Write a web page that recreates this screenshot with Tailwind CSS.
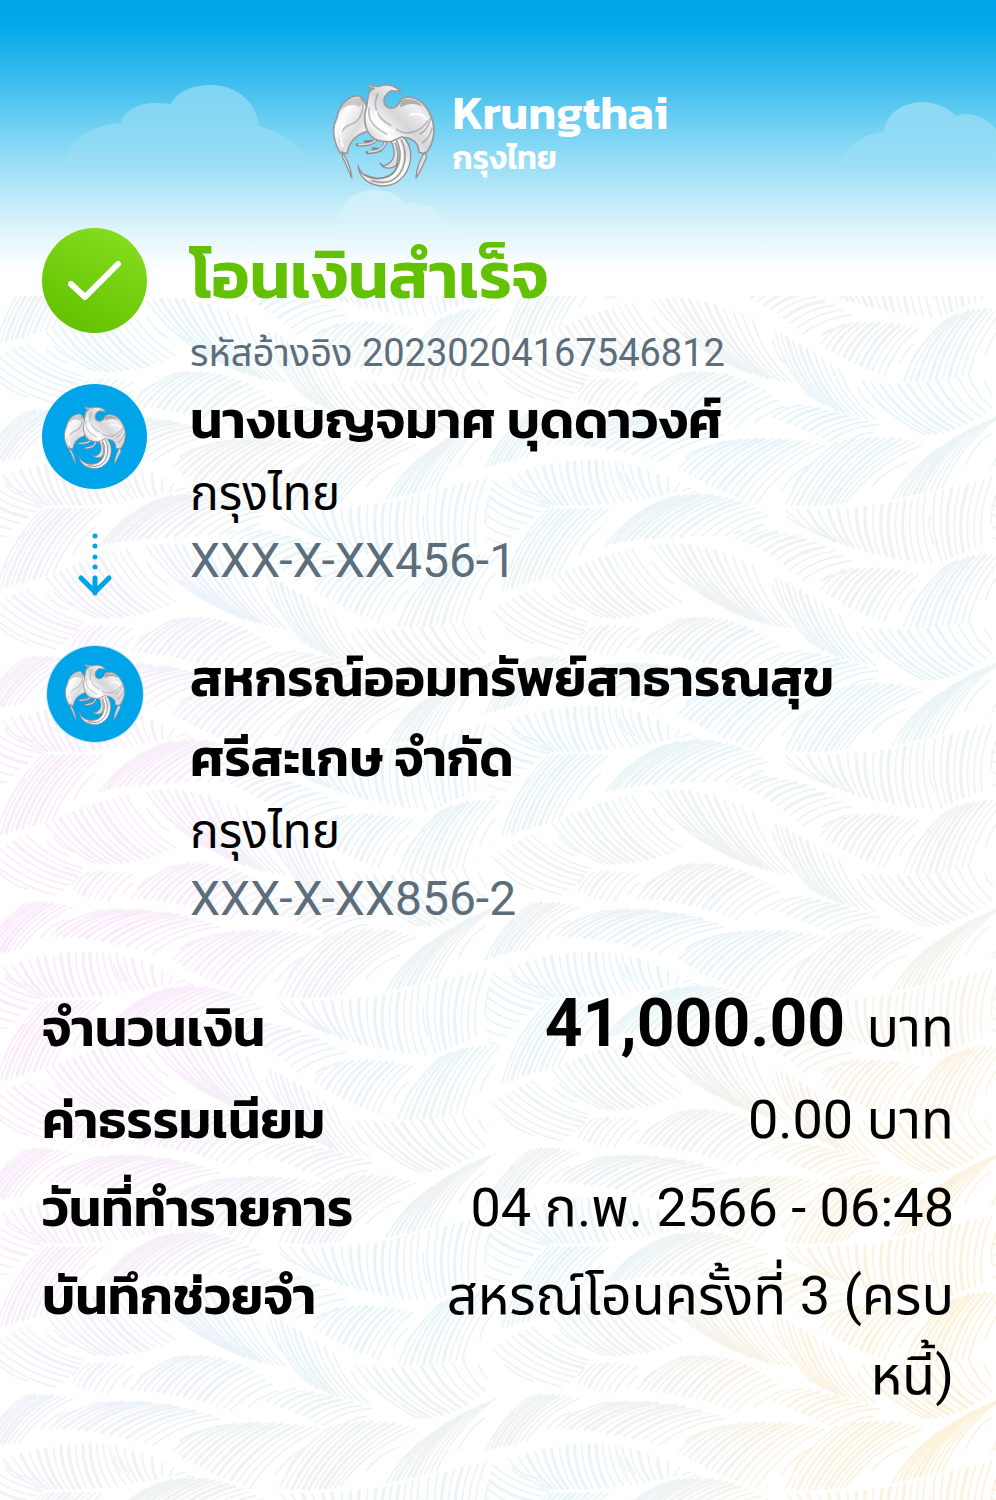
<!DOCTYPE html>
<html lang="th">
<head>
<meta charset="utf-8">
<meta name="viewport" content="width=device-width, initial-scale=1">
<title>Krungthai - โอนเงินสำเร็จ</title>
<script src="https://cdn.jsdelivr.net/npm/@tailwindcss/browser@4"></script>
</head>
<body class="bg-white text-black font-['Roboto','Noto_Sans_Thai','Noto_Sans',sans-serif]">
<div class="relative isolate min-h-screen overflow-hidden">

  <!-- Woven leaf texture -->
  <svg class="absolute inset-x-0 top-[296px] bottom-0 -z-20 h-full w-full" aria-hidden="true">
    <defs>
      <g id="leaves" fill="none" stroke="#fff"><path id="veinsThin" stroke-width="5"/><path id="veinsThick" stroke-width="9"/></g>
      <pattern id="weave" width="1518" height="738" patternUnits="userSpaceOnUse" patternTransform="translate(492 424) scale(.3333)">
        <use href="#leaves"/><use href="#leaves" x="-1518"/><use href="#leaves" x="1518"/>
        <use href="#leaves" y="-738"/><use href="#leaves" x="-1518" y="-738"/><use href="#leaves" x="1518" y="-738"/>
        <use href="#leaves" y="738"/>
      </pattern>
      <mask id="weaveMask" maskUnits="userSpaceOnUse" x="0" y="0" width="100%" height="100%"><rect width="100%" height="100%" fill="url(#weave)"/></mask>
      <linearGradient id="bands" gradientUnits="userSpaceOnUse" x1="0" y1="70" x2="60" y2="310" spreadMethod="repeat">
        <stop offset="0" stop-color="#e6f5fb"/><stop offset=".35" stop-color="#ecf4f4"/><stop offset=".65" stop-color="#eff2f2"/><stop offset="1" stop-color="#e6f5fb"/>
      </linearGradient>
      <radialGradient id="pink" cx="0" cy=".44" r=".4"><stop offset="0" stop-color="#fbe9fb"/><stop offset=".5" stop-color="#f9edfb"/><stop offset="1" stop-color="#f3effb" stop-opacity="0"/></radialGradient>
      <radialGradient id="gold" cx="1" cy=".72" r=".42"><stop offset="0" stop-color="#fdf0d4"/><stop offset=".5" stop-color="#fbf3e3"/><stop offset="1" stop-color="#f6f3ec" stop-opacity="0"/></radialGradient>
    </defs>
    <g mask="url(#weaveMask)">
      <rect width="100%" height="100%" fill="url(#bands)"/>
      <rect width="100%" height="100%" fill="url(#pink)"/>
      <rect width="100%" height="100%" fill="url(#gold)"/>
    </g>
  </svg>

  <!-- Sky -->
  <div class="absolute inset-x-0 top-0 -z-10 h-[296px] bg-[linear-gradient(180deg,#00a4e8_0px,#02a7e9_22px,#35bbed_75px,#7ad4f3_135px,#b5e7f8_190px,#e3f6fc_235px,#ffffff_270px)]">
    <svg class="absolute top-[80px] left-[66px] h-[90px] w-[240px]" viewBox="0 0 240 90" aria-hidden="true">
      <defs><linearGradient id="c1" x1="0" y1="0" x2="0" y2="1"><stop offset="0" stop-color="#fff" stop-opacity=".34"/><stop offset="1" stop-color="#fff" stop-opacity="0"/></linearGradient></defs>
      <path d="M0 76C8 56 32 44 55 43C60 27 76 20 105 24C112 10 128 5 146 5C174 6 191 25 193 46C215 52 232 64 240 78V90H0Z" fill="url(#c1)"/>
    </svg>
    <svg class="absolute top-[98px] right-0 h-[70px] w-[154px]" viewBox="0 0 154 70" aria-hidden="true">
      <path d="M0 60C8 44 25 35 42 34C44 14 62 4 82 4C97 5 109 12 114 18C130 13 146 20 154 32V70H0Z" fill="url(#c1)"/>
    </svg>
    <svg class="absolute top-[188px] left-[330px] h-[50px] w-[140px]" viewBox="0 0 140 50" aria-hidden="true">
      <path d="M8 50C2 22 20 2 45 2C60 2 70 8 76 16C96 12 112 22 120 38L140 50Z" fill="url(#c1)"/>
    </svg>
  </div>

  <svg class="absolute size-0" aria-hidden="true">
    <defs>
      <linearGradient id="silver" x1="0" y1="0" x2="1" y2="1"><stop offset="0" stop-color="#c2c2c5"/><stop offset=".3" stop-color="#fdfdfd"/><stop offset=".6" stop-color="#dcdcdf"/><stop offset=".8" stop-color="#fff"/><stop offset="1" stop-color="#aaa7a8"/></linearGradient>
      <linearGradient id="silver2" x1="1" y1="0" x2="0" y2="1"><stop offset="0" stop-color="#a8a6a8"/><stop offset=".3" stop-color="#f0f0f2"/><stop offset=".5" stop-color="#d6d6d9"/><stop offset=".7" stop-color="#fff"/><stop offset="1" stop-color="#a8a6a8"/></linearGradient>
      <symbol id="garuda" viewBox="0 0 336 336">
        <g stroke-linejoin="round" stroke-linecap="round">
          <path d="M94 54C66 52 34 78 27 118C12 148 14 186 36 224L58 226C60 200 80 170 118 160L128 120C120 94 112 66 94 54Z" fill="url(#silver)" stroke="#9c999b" stroke-width="5"/>
          <path d="M218 64C246 48 282 64 302 100C326 142 322 192 292 228L272 222C274 196 254 182 232 178C210 196 160 194 138 182C110 162 104 122 116 86C120 60 118 38 138 31C124 31 118 26 119 18C128 24 140 25 152 25C168 20 184 20 196 25C206 28 214 34 219 42C207 38 198 40 190 38C174 44 164 62 170 78C176 92 196 94 206 84C216 76 218 72 218 64Z" fill="url(#silver2)" stroke="#9c999b" stroke-width="5"/>
          <path d="M220 66C250 56 274 70 284 86C262 74 240 76 216 88Z" fill="#8e8c8e" opacity=".65"/>
          <path d="M90 58C70 58 46 78 38 96C56 80 78 76 96 88C104 74 102 62 90 58Z" fill="#9b999b" opacity=".5"/>
          <path d="M100 62C112 90 98 126 76 136C52 144 34 162 36 190M124 90C116 126 140 150 176 168M150 46C132 84 146 120 188 142M206 154C236 176 280 160 298 130M276 168C294 158 304 142 306 122M284 194C300 182 310 164 312 150" fill="none" stroke="#8d8a8c" stroke-width="5" opacity=".55"/>
          <path d="M144 100C146 130 170 150 196 160M50 130C38 150 32 176 44 204M248 110C268 104 286 110 294 122" fill="none" stroke="#fff" stroke-width="7" opacity=".9"/>
          <path d="M42 220C54 240 68 262 72 300C60 278 54 254 44 240ZM290 222C276 244 266 268 264 300C278 280 286 258 296 238Z" fill="#dedde0" stroke="#969395" stroke-width="4"/>
          <path d="M142 188C126 204 108 200 88 200M134 190L112 192M172 194C162 220 146 222 118 224M158 216L136 212" fill="none" stroke="#8c898b" stroke-width="10"/>
          <path d="M142 188C126 202 108 199 92 199M172 194C162 218 146 220 122 222" fill="none" stroke="#dddcdf" stroke-width="5"/>
          <path d="M190 190C204 222 202 250 172 262C166 264 158 260 156 254C164 274 192 276 208 258C206 288 174 308 134 300C108 294 92 280 90 262C92 300 126 324 168 324C216 322 250 280 248 226C246 204 238 188 224 176Z" fill="url(#silver)" stroke="#918e90" stroke-width="4"/>
          <path d="M206 188C222 222 220 268 186 292C162 306 132 302 110 290M220 186C240 226 234 286 190 308C170 316 150 314 132 308M202 196C212 220 212 240 206 258" fill="none" stroke="#8b888a" stroke-width="5" opacity=".8"/>
          <path d="M214 192C230 226 226 276 190 298" fill="none" stroke="#fff" stroke-width="5"/>
        </g>
      </symbol>
    </defs>
  </svg>

  <header class="flex items-center justify-center gap-[13px] pt-[78px] pb-0.5 text-white font-['Kanit','Noto_Sans_Thai',sans-serif] font-semibold">
    <svg class="size-[112px] shrink-0" role="img" aria-label="Krungthai"><use href="#garuda"/></svg>
    <div>
      <p class="text-[47px] leading-[48px]">Krungthai</p>
      <p class="text-[32px] leading-[42px]">กรุงไทย</p>
    </div>
  </header>

  <main class="px-[42px] pb-20">
    <section class="grid grid-cols-[105px_minmax(0,1fr)] gap-x-[43px] pt-9">
      <svg class="size-[105px]" viewBox="0 0 105 105" aria-hidden="true">
        <defs><linearGradient id="ok" x1=".8" y1="0" x2=".3" y2="1"><stop offset="0" stop-color="#86de20"/><stop offset="1" stop-color="#62c100"/></linearGradient></defs>
        <circle cx="52.500" cy="52.500" r="52.500" fill="url(#ok)"/>
        <path d="M29 56L43 69L76 36" fill="none" stroke="#fff" stroke-width="6" stroke-linecap="round" stroke-linejoin="round"/>
      </svg>
      <div>
        <h1 class="text-[65px] leading-[94px] font-semibold text-[#62c100] font-['Kanit','Noto_Sans_Thai',sans-serif]">โอนเงินสำเร็จ</h1>
        <p class="text-[38px] leading-[62px] text-[#5c6d7c]">รหัสอ้างอิง 20230204167546812</p>
      </div>
    </section>

    <section class="grid grid-cols-[105px_minmax(0,1fr)] gap-x-[43px] pb-11">
      <div class="flex flex-col items-center">
        <div class="grid size-[105px] place-items-center rounded-full bg-[#00a4e8]"><svg class="size-[68px]" role="img" aria-label="กรุงไทย"><use href="#garuda"/></svg></div>
        <svg class="mt-[43px] h-[66px] w-[36px]" viewBox="0 0 36 66" fill="none" stroke="#00a4e8" stroke-linecap="round" stroke-linejoin="round" aria-hidden="true">
          <path d="M18 4V4M18 14V14M18 25V25M18 35V35" stroke-width="5"/>
          <path d="M18 46V61M4 46L18 60L32 46" stroke-width="5"/>
        </svg>
      </div>
      <div class="-mt-1">
        <h2 class="text-[52px] leading-[80px] font-semibold font-['Kanit','Noto_Sans_Thai',sans-serif]">นางเบญจมาศ บุดดาวงศ์</h2>
        <p class="text-[48px] leading-[67px]">กรุงไทย</p>
        <p class="text-[48px] leading-[67px] text-[#5c6d7c]">XXX-X-XX456-1</p>
      </div>
    </section>

    <section class="grid grid-cols-[105px_minmax(0,1fr)] gap-x-[43px]">
      <div class="mx-auto mt-1 grid size-[96px] place-items-center rounded-full bg-[#00a4e8] ring-1 ring-[#cfe8f5]"><svg class="size-[66px]" role="img" aria-label="กรุงไทย"><use href="#garuda"/></svg></div>
      <div class="-mt-1">
        <h2 class="text-[52px] leading-[80px] font-semibold font-['Kanit','Noto_Sans_Thai',sans-serif]">สหกรณ์ออมทรัพย์สาธารณสุขศรีสะเกษ จำกัด</h2>
        <p class="text-[48px] leading-[67px]">กรุงไทย</p>
        <p class="text-[48px] leading-[67px] text-[#5c6d7c]">XXX-X-XX856-2</p>
      </div>
    </section>

    <dl class="mt-[52px] flex flex-col gap-2 text-[54px] leading-[80px]">
      <div class="flex items-baseline justify-between gap-6 pb-1">
        <dt class="shrink-0 text-[52px] font-semibold font-['Kanit','Noto_Sans_Thai',sans-serif]">จำนวนเงิน</dt>
        <dd class="text-right"><span class="mr-2 text-[66px] font-bold">41,000.00</span> บาท</dd>
      </div>
      <div class="flex items-baseline justify-between gap-6">
        <dt class="shrink-0 text-[52px] font-semibold font-['Kanit','Noto_Sans_Thai',sans-serif]">ค่าธรรมเนียม</dt>
        <dd class="text-right">0.00 บาท</dd>
      </div>
      <div class="flex items-baseline justify-between gap-6">
        <dt class="shrink-0 text-[52px] font-semibold font-['Kanit','Noto_Sans_Thai',sans-serif]">วันที่ทำรายการ</dt>
        <dd class="text-right">04 ก.พ. 2566 - 06:48</dd>
      </div>
      <div class="flex items-baseline justify-between gap-6">
        <dt class="shrink-0 text-[52px] font-semibold font-['Kanit','Noto_Sans_Thai',sans-serif]">บันทึกช่วยจำ</dt>
        <dd class="max-w-[560px] text-right">สหรณ์โอนครั้งที่ 3 (ครบหนี้)</dd>
      </div>
    </dl>
  </main>
</div>

<script>
  // Each leaf: start edge (3 points), end edge (3 points), number of veins.
  // Veins run from the start edge to the end edge and bow to the left.
  const leaves = [
    [30,350,100,330,200,300, 170,105,250,100,350,105, 10],
    [340,215,420,190,700,185, 520,75,680,30,830,125, 15],
    [730,195,840,230,930,320, 800,165,950,180,1080,260, 10],
    [985,350,1080,410,1175,445, 1060,285,1180,275,1280,300, 11],
    [1235,460,1330,465,1430,440, 1370,270,1440,235,1540,240, 10],
    [260,515,300,540,365,545, 310,455,370,450,440,462, 6],
    [435,535,580,540,730,600, 570,435,720,410,860,515, 15],
    [840,570,930,600,1010,640, 930,530,1040,550,1160,590, 8],
    [-20,720,30,700,100,690, 120,550,180,540,260,560, 8],
    [190,650,320,650,500,700, 350,570,560,560,700,620, 13],
    [560,720,660,780,790,830, 700,640,860,620,1000,650, 13],
    [880,830,980,840,1060,825, 1040,640,1180,610,1290,650, 11],
    [1200,815,1270,800,1350,780, 1360,650,1450,590,1530,560, 9],
    [50,740,240,680,370,700, 160,830,240,840,420,820, 14],
    [390,700,470,720,600,780, 440,815,500,805,570,790, 7],
    [880,105,1150,110,1300,60, 1000,190,1130,250,1320,270, 16],
    [1330,55,1420,30,1500,10, 1350,265,1400,240,1470,215, 7],
    [1518,20,1500,80,1500,190, 1690,100,1620,140,1560,210, 6],
    [180,310,300,250,420,225, 330,430,450,440,570,385, 12],
    [480,215,600,190,780,270, 700,400,790,450,900,465, 12],
    [850,310,920,340,1040,420, 960,510,1040,560,1150,575, 9],
    [1110,460,1250,480,1430,440, 1300,620,1400,620,1500,540, 11],
    [120,345,60,370,0,410, 290,445,280,480,210,525, 6]
  ];
  const q = (a, b, c, t) => (1-t)*(1-t)*a + 2*t*(1-t)*b + t*t*c;
  let thin = '', thick = '';
  for (const [ax,ay,bx,by,cx,cy,dx,dy,ex,ey,fx,fy,n] of leaves) {
    for (let i = -1; i <= n + 1; i++) {
      const t = i / n;
      // The first and last veins are shorter so that the leaf tapers.
      const cut = i < 0 || i > n ? 0.28 : 0;
      let x1 = q(ax,bx,cx,t), y1 = q(ay,by,cy,t), x2 = q(dx,ex,fx,t), y2 = q(dy,ey,fy,t);
      const w = x2 - x1, h = y2 - y1;
      x1 += w*cut; y1 += h*cut; x2 -= w*cut; y2 -= h*cut;
      const up = y2 < y1 ? 1 : -1;
      const mx = (x1+x2)/2 + (y2-y1)*0.14*up, my = (y1+y2)/2 - (x2-x1)*0.14*up;
      const seg = `M${x1.toFixed(0)} ${y1.toFixed(0)}Q${mx.toFixed(0)} ${my.toFixed(0)} ${x2.toFixed(0)} ${y2.toFixed(0)}`;
      if (i > 1 && i < n - 2 && i % 3) thick += seg; else thin += seg;
    }
  }
  document.getElementById('veinsThin').setAttribute('d', thin);
  document.getElementById('veinsThick').setAttribute('d', thick);
</script>
</body>
</html>
